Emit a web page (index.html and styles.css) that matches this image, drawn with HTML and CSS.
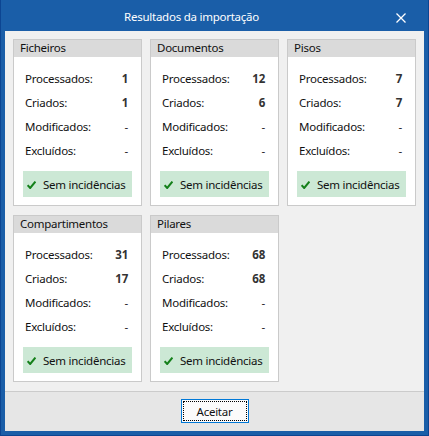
FILE: index.html
```html
<!DOCTYPE html>
<html lang="pt">
<head>
<meta charset="utf-8">
<title>Resultados da importação</title>
<link rel="stylesheet" href="styles.css">
</head>
<body>
<div class="window">
  <div class="titlebar">
    <div class="title">Resultados da importação</div>
    <div class="close">
      <svg width="10" height="10" viewBox="0 0 10 10"><path d="M0.5 0.5 L9.5 9.5 M9.5 0.5 L0.5 9.5" stroke="#fff" stroke-width="1.3" fill="none"/></svg>
    </div>
  </div>
  <div class="content">
    <div class="grid">
      <section class="panel">
        <div class="phead">Ficheiros</div>
        <div class="rows">
          <div class="row"><span>Processados:</span><b>1</b></div>
          <div class="row"><span>Criados:</span><b>1</b></div>
          <div class="row"><span>Modificados:</span><span class="dash">-</span></div>
          <div class="row"><span>Excluídos:</span><span class="dash">-</span></div>
        </div>
        <div class="ok"><svg class="chk" width="9" height="8" viewBox="0 0 9 8"><path d="M0.6 4.2 L3.2 7 L8.4 0.6" stroke="#14801a" stroke-width="2" fill="none"/></svg>Sem incidências</div>
      </section>
      <section class="panel">
        <div class="phead">Documentos</div>
        <div class="rows">
          <div class="row"><span>Processados:</span><b>12</b></div>
          <div class="row"><span>Criados:</span><b>6</b></div>
          <div class="row"><span>Modificados:</span><span class="dash">-</span></div>
          <div class="row"><span>Excluídos:</span><span class="dash">-</span></div>
        </div>
        <div class="ok"><svg class="chk" width="9" height="8" viewBox="0 0 9 8"><path d="M0.6 4.2 L3.2 7 L8.4 0.6" stroke="#14801a" stroke-width="2" fill="none"/></svg>Sem incidências</div>
      </section>
      <section class="panel">
        <div class="phead">Pisos</div>
        <div class="rows">
          <div class="row"><span>Processados:</span><b>7</b></div>
          <div class="row"><span>Criados:</span><b>7</b></div>
          <div class="row"><span>Modificados:</span><span class="dash">-</span></div>
          <div class="row"><span>Excluídos:</span><span class="dash">-</span></div>
        </div>
        <div class="ok"><svg class="chk" width="9" height="8" viewBox="0 0 9 8"><path d="M0.6 4.2 L3.2 7 L8.4 0.6" stroke="#14801a" stroke-width="2" fill="none"/></svg>Sem incidências</div>
      </section>
      <section class="panel">
        <div class="phead">Compartimentos</div>
        <div class="rows">
          <div class="row"><span>Processados:</span><b>31</b></div>
          <div class="row"><span>Criados:</span><b>17</b></div>
          <div class="row"><span>Modificados:</span><span class="dash">-</span></div>
          <div class="row"><span>Excluídos:</span><span class="dash">-</span></div>
        </div>
        <div class="ok"><svg class="chk" width="9" height="8" viewBox="0 0 9 8"><path d="M0.6 4.2 L3.2 7 L8.4 0.6" stroke="#14801a" stroke-width="2" fill="none"/></svg>Sem incidências</div>
      </section>
      <section class="panel">
        <div class="phead">Pilares</div>
        <div class="rows">
          <div class="row"><span>Processados:</span><b>68</b></div>
          <div class="row"><span>Criados:</span><b>68</b></div>
          <div class="row"><span>Modificados:</span><span class="dash">-</span></div>
          <div class="row"><span>Excluídos:</span><span class="dash">-</span></div>
        </div>
        <div class="ok"><svg class="chk" width="9" height="8" viewBox="0 0 9 8"><path d="M0.6 4.2 L3.2 7 L8.4 0.6" stroke="#14801a" stroke-width="2" fill="none"/></svg>Sem incidências</div>
      </section>
    </div>
  </div>
  <div class="footer">
    <button class="btn"><span class="focus">Aceitar</span></button>
  </div>
</div>
</body>
</html>
```
FILE: styles.css
```css
* { box-sizing: border-box; }
html, body { margin: 0; padding: 0; }
body {
  font-family: "Noto Sans", "Open Sans", sans-serif;
  font-size: 11.5px;
  letter-spacing: -0.25px;
  color: #111;
  background: #1a5ea8;
}
.window {
  width: 429px;
  height: 436px;
  background: #1a5ea8;
  border: 1px solid #0c4592;
  border-top: none;
  padding: 0 4px 4px 4px;
  display: flex;
  flex-direction: column;
}
.titlebar {
  height: 31px;
  display: flex;
  align-items: center;
  color: #fff;
  margin: 0 -4px;
}
.title {
  width: 381px;
  text-align: center;
  padding-top: 2px;
  white-space: nowrap;
}
.close {
  width: 38px;
  display: flex;
  justify-content: center;
  padding-top: 5px;
}
.content {
  background: #f0f0f0;
  height: 360px;
  padding: 8px 8px 0 8px;
}
.grid {
  display: grid;
  grid-template-columns: 129px 129px 129px;
  grid-template-rows: 167px 167px;
  column-gap: 8px;
  row-gap: 9px;
}
.panel {
  background: #fff;
  border: 1px solid #cacaca;
  display: flex;
  flex-direction: column;
}
.phead {
  background: #dadada;
  height: 17px;
  line-height: 16px;
  padding-left: 6px;
  white-space: nowrap;
}
.rows {
  padding: 9px 13px 0 11px;
}
.row {
  height: 24px;
  display: flex;
  justify-content: space-between;
  align-items: center;
  white-space: nowrap;
}
.row b {
  font-weight: bold;
  color: #333;
}
.dash { color: #222; }
.ok {
  margin: 9px 9px 0 9px;
  height: 26px;
  background: #cce8d5;
  display: flex;
  align-items: center;
  padding-left: 4px;
  white-space: nowrap;
}
.chk { margin-right: 7px; margin-top: 1px; flex: none; }
.footer {
  flex: 1;
  background: #e6e6e6;
  border-top: 1px solid #cbcbcb;
  display: flex;
  justify-content: center;
  padding-top: 7px;
}
.btn {
  width: 68px;
  height: 24px;
  border: 1px solid #0078d7;
  background: #fbfbfb;
  padding: 1px;
  font: inherit;
  letter-spacing: inherit;
  color: #111;
  display: flex;
  outline: none;
}
.focus {
  flex: 1;
  border: 1px dotted #000;
  display: flex;
  align-items: center;
  justify-content: center;
}
```
